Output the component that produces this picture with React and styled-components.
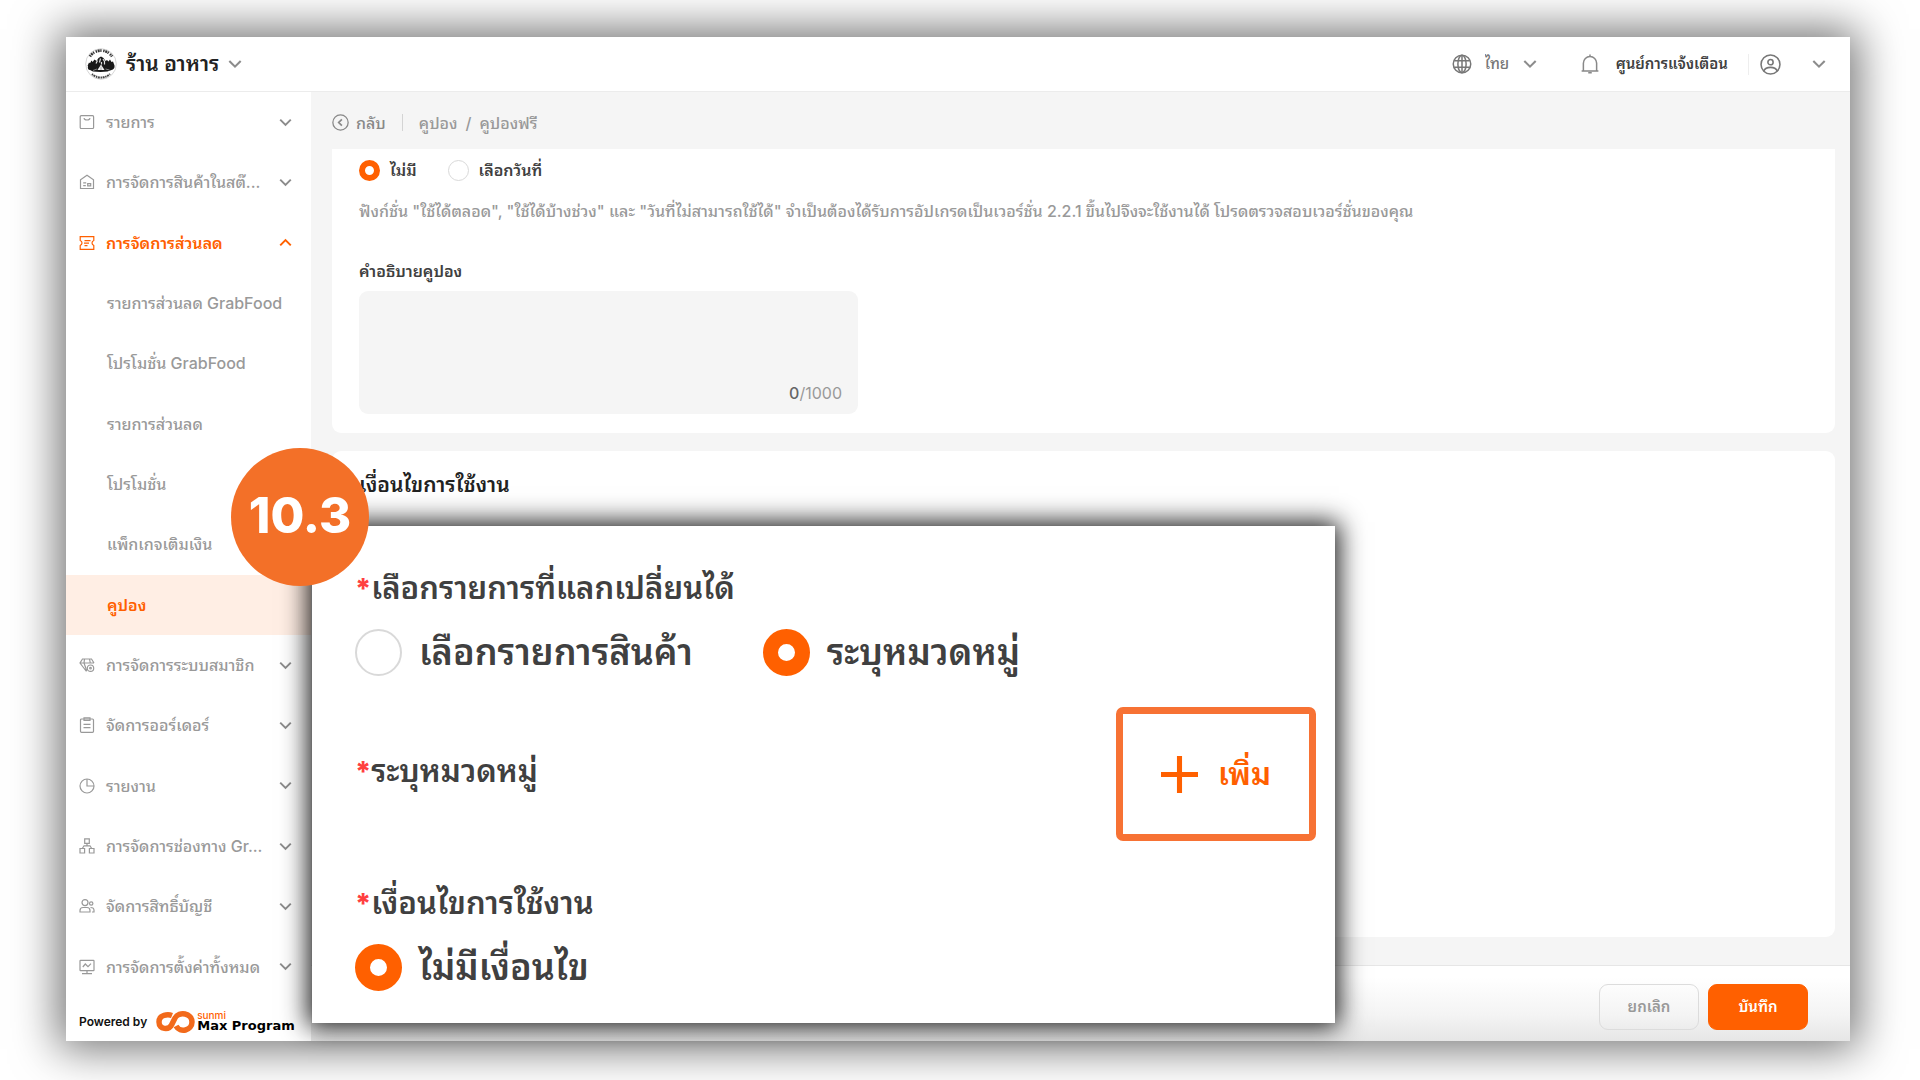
import { useState } from 'react';
import styled, { createGlobalStyle, css } from 'styled-components';

const ORANGE = '#ff6000';
const GREY = '#999';
const DARK = '#404040';

const GlobalStyle = createGlobalStyle`
  * {
    box-sizing: border-box;
  }

  body {
    margin: 0;
    background: #fff;
    color: ${DARK};
    font-family: Inter, 'Noto Sans Thai Looped', Loma, 'Noto Sans', sans-serif;
    font-size: 16px;
    line-height: 22px;
  }

  button, select, textarea, input {
    margin: 0;
    padding: 0;
    border: 0;
    background: none;
    color: inherit;
    font: inherit;
  }

  button {
    cursor: pointer;
  }

  a {
    color: inherit;
    text-decoration: none;
  }
`;

const Page = styled.div`
  display: flex;
  min-height: 100vh;
  padding: 37px 70px 39px 66px;
`;

const Frame = styled.div`
  position: relative;
  display: flex;
  flex: 1;
  flex-direction: column;
  min-width: 0;
  background: #fff;
  box-shadow: 0 0 42px 8px rgba(0, 0, 0, 0.55);
`;

const Header = styled.header`
  display: flex;
  align-items: center;
  justify-content: space-between;
  height: 55px;
  padding: 0 24px 0 19px;
  border-bottom: 1px solid #ececec;
`;

const ShopButton = styled.button`
  display: flex;
  align-items: center;
  gap: 9px;
  color: #222;
  font-size: 21px;
  font-weight: 600;
  line-height: 32px;
`;

const HeaderTools = styled.div`
  display: flex;
  align-items: center;
  color: #777;
  font-size: 15px;
`;

const Language = styled.label`
  display: flex;
  align-items: center;
  gap: 13px;
  margin-right: 43px;
  font-weight: 500;

  select {
    appearance: none;
  }
`;

const NoticeButton = styled.button`
  display: flex;
  align-items: center;
  gap: 16px;
  padding-right: 20px;
  color: ${DARK};
  font-weight: 600;
`;

const AccountButton = styled.button`
  display: flex;
  align-items: center;
  gap: 31px;
  padding-left: 11px;
  border-left: 1px solid #eee;
`;

const Body = styled.div`
  display: flex;
  flex: 1;
  min-height: 0;
`;

const Sidebar = styled.aside`
  display: flex;
  flex-direction: column;
  width: 245px;
  flex-shrink: 0;
`;

const Nav = styled.nav`
  display: flex;
  flex: 1;
  flex-direction: column;
`;

const navRow = css`
  display: flex;
  flex: 1;
  align-items: center;
  min-height: 44px;
  color: ${GREY};
  font-weight: 500;
  text-align: left;
  white-space: nowrap;
`;

const NavGroup = styled.button`
  ${navRow}
  gap: 11px;
  padding: 0 19px 0 13px;
  ${({ $open }) => $open && `color: ${ORANGE}; font-weight: 600;`}
`;

const NavText = styled.span`
  flex: 1;
  min-width: 0;
`;

const NavLink = styled.a`
  ${navRow}
  padding-left: 41px;
  ${({ $active }) =>
    $active && `background: #ffeee4; color: ${ORANGE}; font-weight: 600;`}
`;

const Powered = styled.div`
  display: flex;
  align-items: center;
  height: 44px;
  padding: 6px 0 0 13px;
  color: #111;
  font-size: 12px;
  font-weight: 600;
  white-space: nowrap;

  svg {
    margin: 0 2px 0 9px;
  }
`;

const Brand = styled.div`
  display: flex;
  flex-direction: column;
`;

const BrandTop = styled.span`
  color: ${ORANGE};
  font-size: 10px;
  font-weight: 500;
  line-height: 8px;
`;

const BrandName = styled.span`
  color: #000;
  font-family: 'DejaVu Sans', sans-serif;
  font-size: 13px;
  font-weight: 700;
  line-height: 14px;
`;

const Main = styled.main`
  display: flex;
  flex: 1;
  flex-direction: column;
  min-width: 0;
  background: #f5f5f5;
`;

const Breadcrumb = styled.nav`
  display: flex;
  align-items: center;
  height: 57px;
  padding: 4px 21px 0;
  color: ${GREY};
  font-weight: 500;
`;

const BackButton = styled.button`
  display: flex;
  align-items: center;
  gap: 7px;
  margin-right: 16px;
  padding-right: 16px;
  border-right: 1px solid #d4d4d4;
  color: #888;
  line-height: 16px;
`;

const Slash = styled.span`
  margin: 0 8px;
`;

const Cards = styled.div`
  display: flex;
  flex: 1;
  flex-direction: column;
  gap: 18px;
  padding: 0 15px 28px 21px;
`;

const Card = styled.section`
  display: flex;
  flex-direction: column;
  padding: 10px 27px 19px;
  border-radius: 0 0 9px 9px;
  background: #fff;
`;

const ConditionCard = styled(Card)`
  flex: 1;
  padding-top: 20px;
  border-radius: 9px;
`;

const CardTitle = styled.h2`
  margin: 0;
  color: #222;
  font-size: 21px;
  font-weight: 600;
  line-height: 28px;
`;

const RadioRow = styled.div`
  display: flex;
  gap: ${({ $large }) => ($large ? 70 : 31)}px;
`;

const RadioLabel = styled.label`
  display: flex;
  align-items: center;
  gap: ${({ $large }) => ($large ? 17 : 10)}px;
  font-size: ${({ $large }) => ($large ? 36 : 16)}px;
  font-weight: 600;
  line-height: ${({ $large }) => ($large ? 48 : 22)}px;
  white-space: nowrap;
`;

const Radio = styled.input`
  flex-shrink: 0;
  width: ${({ $large }) => ($large ? 47 : 21)}px;
  height: ${({ $large }) => ($large ? 47 : 21)}px;
  border: ${({ $large }) => ($large ? 2 : 1)}px solid #d9d9d9;
  border-radius: 50%;
  background: #fff;
  appearance: none;

  &:checked {
    border: ${({ $large }) => ($large ? 15 : 6)}px solid ${ORANGE};
  }
`;

const Hint = styled.p`
  margin: 19px 0 38px;
  color: ${GREY};
  font-weight: 500;
`;

const FieldLabel = styled.label`
  font-weight: 600;
`;

const TextBox = styled.div`
  display: flex;
  flex-direction: column;
  width: 499px;
  max-width: 100%;
  height: 123px;
  margin-top: 9px;
  padding: 10px 16px;
  border-radius: 9px;
  background: #f5f5f5;

  textarea {
    flex: 1;
    outline: 0;
    resize: none;
  }
`;

const Counter = styled.span`
  align-self: flex-end;
  color: ${GREY};

  b {
    color: #666;
    font-weight: 500;
  }
`;

const Footer = styled.footer`
  display: flex;
  align-items: center;
  justify-content: flex-end;
  gap: 9px;
  height: 76px;
  padding: 6px 42px 0 0;
  border-top: 1px solid #e6e6e6;
  background: linear-gradient(#fff 15%, #f4f4f4 65%, #e6e6e6);
`;

const FooterButton = styled.button`
  width: 100px;
  height: 46px;
  border: 1px solid ${({ $primary }) => ($primary ? ORANGE : '#dcdcdc')};
  border-radius: 9px;
  background: ${({ $primary }) => ($primary ? ORANGE : 'transparent')};
  color: ${({ $primary }) => ($primary ? '#fff' : GREY)};
  font-size: 15px;
  font-weight: 600;
`;

// Enlarged panel that floats above the form
const Callout = styled.section`
  position: absolute;
  top: 489px;
  left: 246px;
  width: 1023px;
  height: 497px;
  padding: 37px 19px 0 43px;
  background: #fff;
  box-shadow: 0 0 24px 4px rgba(0, 0, 0, 0.9);
`;

const CalloutTitle = styled.h3`
  margin: 0;
  font-size: 31px;
  font-weight: 600;
  line-height: 50px;

  &::before {
    content: '*';
    color: #ff4040;
    font-size: 28px;
    font-weight: 800;
  }
`;

const CalloutRow = styled.div`
  display: flex;
  align-items: center;
  justify-content: space-between;
  margin: 31px 0 37px;

  ${CalloutTitle} {
    padding-bottom: 5px;
  }
`;

const CalloutOptions = styled.div`
  padding-top: 14px;
`;

const AddButton = styled.button`
  display: flex;
  align-items: center;
  justify-content: center;
  gap: 20px;
  width: 200px;
  height: 134px;
  border: 7px solid #f77234;
  border-radius: 7px;
  color: ${ORANGE};
  font-size: 31px;
  font-weight: 600;
  line-height: 48px;
`;

const StepBadge = styled.div`
  position: absolute;
  top: 411px;
  left: 165px;
  display: flex;
  align-items: center;
  justify-content: center;
  width: 138px;
  height: 138px;
  padding-bottom: 2px;
  border-radius: 50%;
  background: #f37028;
  color: #fff;
  font-size: 49px;
  font-weight: 800;
`;

const Icon = ({ size = 16, children, ...rest }) => (
  <svg
    width={size}
    height={size}
    viewBox='0 0 16 16'
    fill='none'
    stroke='currentColor'
    strokeWidth='1.2'
    aria-hidden='true'
    {...rest}
  >
    {children}
  </svg>
);

const Chevron = ({ up, size = 13 }) => (
  <Icon size={size} strokeWidth='2.4' stroke={up ? ORANGE : '#8c8c8c'}>
    <path d={up ? 'M1.5 11.5 8 5l6.5 6.5' : 'M1.5 4.5 8 11l6.5-6.5'} />
  </Icon>
);

const icons = {
  bag: (
    <>
      <rect x='1.2' y='1.7' width='13.4' height='12.8' rx='1' />
      <path d='M5 4.2c.4 2.4 5.6 2.4 6 0' />
    </>
  ),
  store: (
    <>
      <path d='M1.5 14.5V5.7L8 1.3l6.5 4.4v8.8z' />
      <path d='M4.2 8.9h3M4.2 11.7h2.6M8.7 9.7h3v2.2h-3z' />
    </>
  ),
  coupon: (
    <>
      <path d='M1.2 1.7h13.6v3.8c-2.4 1.2-2.4 3.8 0 5v3.8H1.2v-3.8c2.4-1.2 2.4-3.8 0-5z' />
      <path d='M5.5 5.7h6M5 8.2h5M5.5 10.7h3' />
    </>
  ),
  member: (
    <>
      <path d='M7.5 14.5 1 6l2.5-4h9L15 6M1 6h14M5 6l2.8 8M5.5 2 5 6M10.5 2l.8 4' />
      <circle cx='11.5' cy='11.2' r='3.2' />
      <circle cx='11.5' cy='11.2' r='.8' />
    </>
  ),
  order: (
    <>
      <rect x='1.5' y='2' width='13' height='13.3' rx='1' />
      <path d='M5 .9h6v2.5H5zM4.5 7.3h7M4.5 10.7h7' />
    </>
  ),
  report: (
    <>
      <circle cx='8' cy='8' r='7' />
      <path d='M8 1v7h7' />
    </>
  ),
  channel: (
    <>
      <path d='M5.7.9h4.6v4.5H5.7zM1 10.5h4.6V15H1zM10.4 10.5H15V15h-4.6z' />
      <path d='M8 5.4v2.4M3.3 10.5 5 7.8h6l1.7 2.7' />
    </>
  ),
  users: (
    <>
      <circle cx='6' cy='4.6' r='3' />
      <path d='M1 14v-1.5c0-2 1.5-3 3-3h4c1.5 0 3 1 3 3V14z' />
      <circle cx='12.2' cy='5.5' r='1.7' />
      <path d='M11.5 9.5c2 0 3.5 1 3.5 2.8V14h-2' />
    </>
  ),
  settings: (
    <>
      <rect x='1' y='1.3' width='14' height='10.4' rx='.6' />
      <path d='M3.8 8 6.3 5 9 7.7l3-3M8 11.7v2.6M3 14.6h10' />
    </>
  ),
};

const GlobeIcon = () => (
  <Icon size={20}>
    <circle cx='8' cy='8' r='7' />
    <ellipse cx='8' cy='8' rx='3.3' ry='7' />
    <path d='M8 1v14M1.7 5.4h12.6M1.7 10.6h12.6' />
  </Icon>
);

const BellIcon = () => (
  <Icon size={20} stroke='#888'>
    <path d='M8 .3V2M2.7 13.5V7.3a5.3 5.3 0 0 1 10.6 0v6.2M1.3 13.5h13.4M6.6 14.9h2.8' />
  </Icon>
);

const UserIcon = () => (
  <Icon size={21}>
    <circle cx='8' cy='8' r='7.2' />
    <circle cx='8' cy='6.2' r='2' />
    <path d='M2.9 12.9c1.5-3.6 8.7-3.6 10.2 0' />
  </Icon>
);

const BackIcon = () => (
  <Icon size={17}>
    <circle cx='8' cy='8' r='7.2' />
    <path d='M9.3 5l-3 3 3 3' strokeWidth='1.6' />
  </Icon>
);

const ShopLogo = () => (
  <svg width='32' height='32' viewBox='0 0 32 32' fill='none' aria-hidden='true'>
    <circle cx='16' cy='16' r='15.3' fill='#fff' stroke='#bbb' strokeWidth='.6' />
    <path
      d='M5 8.5a13.2 13.2 0 0 1 22 0'
      stroke='#333'
      strokeWidth='2.6'
      strokeDasharray='1.4 .7 2 .6 1.2 1.6'
    />
    <path
      d='M7 26a13.2 13.2 0 0 0 18 0'
      stroke='#444'
      strokeWidth='2'
      strokeDasharray='1.4 .6 2 .7'
    />
    <path
      d='M2.5 18 4 14.5l1 .8 1.5-2.8L7.7 14l1.8-2.500 2 1.500 2-3L16 8.500l2.500 1.500 2 3 1.500-1 1.500 1.500 1.500-2 1.500 2.500 1.500-.5 1.500 4c.5 2.500-1 4-3 4.500l-4 1.500-7 .5-7.500-.5-3-1.500c-2 0-2.500-2-2-4z'
      fill='#181818'
    />
    <path
      d='m12.5 12.5-1.5 3M15.5 10.5l-1 4M18 11l1.5 2.5v3M16.5 14v2.5'
      stroke='#ddd'
      strokeWidth='1.2'
    />
    <path d='m16 16.5 3.5 5.5h-7z' fill='#f2f2f2' />
    <path d='M16 18.5V22M8 22.5l4-1.5M20.5 21l4 1' stroke='#999' strokeWidth='.8' />
  </svg>
);

const BrandLogo = () => (
  <svg width='39' height='24' viewBox='0 0 39 24' fill='none' aria-hidden='true'>
    <path
      d='M16 5.5C12 4 3 4.5 3 12c0 8 10 8 12.5 3L19 8c4-7 17-5 17 4 0 8.5-12 11.5-16 4'
      stroke='#f26a1b'
      strokeWidth='5.5'
    />
  </svg>
);

const NAV = [
  { icon: 'bag', text: 'รายการ' },
  { icon: 'store', text: 'การจัดการสินค้าในสต๊...' },
  {
    icon: 'coupon',
    text: 'การจัดการส่วนลด',
    links: [
      'รายการส่วนลด GrabFood',
      'โปรโมชั่น GrabFood',
      'รายการส่วนลด',
      'โปรโมชั่น',
      'แพ็กเกจเติมเงิน',
      'คูปอง',
    ],
  },
  { icon: 'member', text: 'การจัดการระบบสมาชิก' },
  { icon: 'order', text: 'จัดการออร์เดอร์' },
  { icon: 'report', text: 'รายงาน' },
  { icon: 'channel', text: 'การจัดการช่องทาง Gr...' },
  { icon: 'users', text: 'จัดการสิทธิ์บัญชี' },
  { icon: 'settings', text: 'การจัดการตั้งค่าทั้งหมด' },
];

const RadioGroup = ({ name, options, initial, large }) => {
  const [value, setValue] = useState(initial);
  return (
    <RadioRow role='radiogroup' $large={large}>
      {options.map(option => (
        <RadioLabel key={option} $large={large}>
          <Radio
            type='radio'
            name={name}
            checked={value === option}
            onChange={() => setValue(option)}
            $large={large}
          />
          {option}
        </RadioLabel>
      ))}
    </RadioRow>
  );
};

const SideMenu = () => (
  <Sidebar>
    <Nav>
      {NAV.map(({ icon, text, links }) => [
        <NavGroup key={text} type='button' $open={!!links}>
          <Icon>{icons[icon]}</Icon>
          <NavText>{text}</NavText>
          <Chevron up={!!links} />
        </NavGroup>,
        ...(links || []).map(link => (
          <NavLink key={`link-${link}`} href='#' $active={link === 'คูปอง'}>
            {link}
          </NavLink>
        )),
      ])}
    </Nav>
    <Powered>
      Powered by
      <BrandLogo />
      <Brand>
        <BrandTop>sunmi</BrandTop>
        <BrandName>Max Program</BrandName>
      </Brand>
    </Powered>
  </Sidebar>
);

const App = () => {
  const [description, setDescription] = useState('');
  return (
    <Page>
      <GlobalStyle />
      <Frame>
        <Header>
          <ShopButton type='button'>
            <ShopLogo />
            ร้าน อาหาร
            <Chevron size={14} />
          </ShopButton>
          <HeaderTools>
            <Language>
              <GlobeIcon />
              <select aria-label='ภาษา'>
                <option>ไทย</option>
              </select>
              <Chevron size={14} />
            </Language>
            <NoticeButton type='button'>
              <BellIcon />
              ศูนย์การแจ้งเตือน
            </NoticeButton>
            <AccountButton type='button' aria-label='บัญชี'>
              <UserIcon />
              <Chevron size={14} />
            </AccountButton>
          </HeaderTools>
        </Header>
        <Body>
          <SideMenu />
          <Main>
            <Breadcrumb>
              <BackButton type='button'>
                <BackIcon />
                กลับ
              </BackButton>
              <a href='#'>คูปอง</a>
              <Slash>/</Slash>
              <a href='#'>คูปองฟรี</a>
            </Breadcrumb>
            <Cards>
              <Card>
                <RadioGroup
                  name='blackout'
                  options={['ไม่มี', 'เลือกวันที่']}
                  initial='ไม่มี'
                />
                <Hint>
                  ฟังก์ชั่น "ใช้ได้ตลอด", "ใช้ได้บ้างช่วง" และ
                  "วันที่ไม่สามารถใช้ได้" จำเป็นต้องได้รับการอัปเกรดเป็นเวอร์ชั่น
                  2.2.1 ขึ้นไปจึงจะใช้งานได้ โปรดตรวจสอบเวอร์ชั่นของคุณ
                </Hint>
                <FieldLabel htmlFor='description'>คำอธิบายคูปอง</FieldLabel>
                <TextBox>
                  <textarea
                    id='description'
                    maxLength={1000}
                    value={description}
                    onChange={event => setDescription(event.target.value)}
                  />
                  <Counter>
                    <b>{description.length}</b>/1000
                  </Counter>
                </TextBox>
              </Card>
              <ConditionCard>
                <CardTitle>เงื่อนไขการใช้งาน</CardTitle>
              </ConditionCard>
            </Cards>
            <Footer>
              <FooterButton type='button'>ยกเลิก</FooterButton>
              <FooterButton type='button' $primary>
                บันทึก
              </FooterButton>
            </Footer>
          </Main>
        </Body>
        <Callout>
          <CalloutTitle>เลือกรายการที่แลกเปลี่ยนได้</CalloutTitle>
          <CalloutOptions>
            <RadioGroup
              name='exchange'
              options={['เลือกรายการสินค้า', 'ระบุหมวดหมู่']}
              initial='ระบุหมวดหมู่'
              large
            />
          </CalloutOptions>
          <CalloutRow>
            <CalloutTitle>ระบุหมวดหมู่</CalloutTitle>
            <AddButton type='button'>
              <Icon size={37} strokeWidth='2.2'>
                <path d='M8 0v16M0 8h16' />
              </Icon>
              เพิ่ม
            </AddButton>
          </CalloutRow>
          <CalloutTitle>เงื่อนไขการใช้งาน</CalloutTitle>
          <CalloutOptions>
            <RadioGroup
              name='condition'
              options={['ไม่มีเงื่อนไข']}
              initial='ไม่มีเงื่อนไข'
              large
            />
          </CalloutOptions>
        </Callout>
        <StepBadge>10.3</StepBadge>
      </Frame>
    </Page>
  );
};

export default App;
